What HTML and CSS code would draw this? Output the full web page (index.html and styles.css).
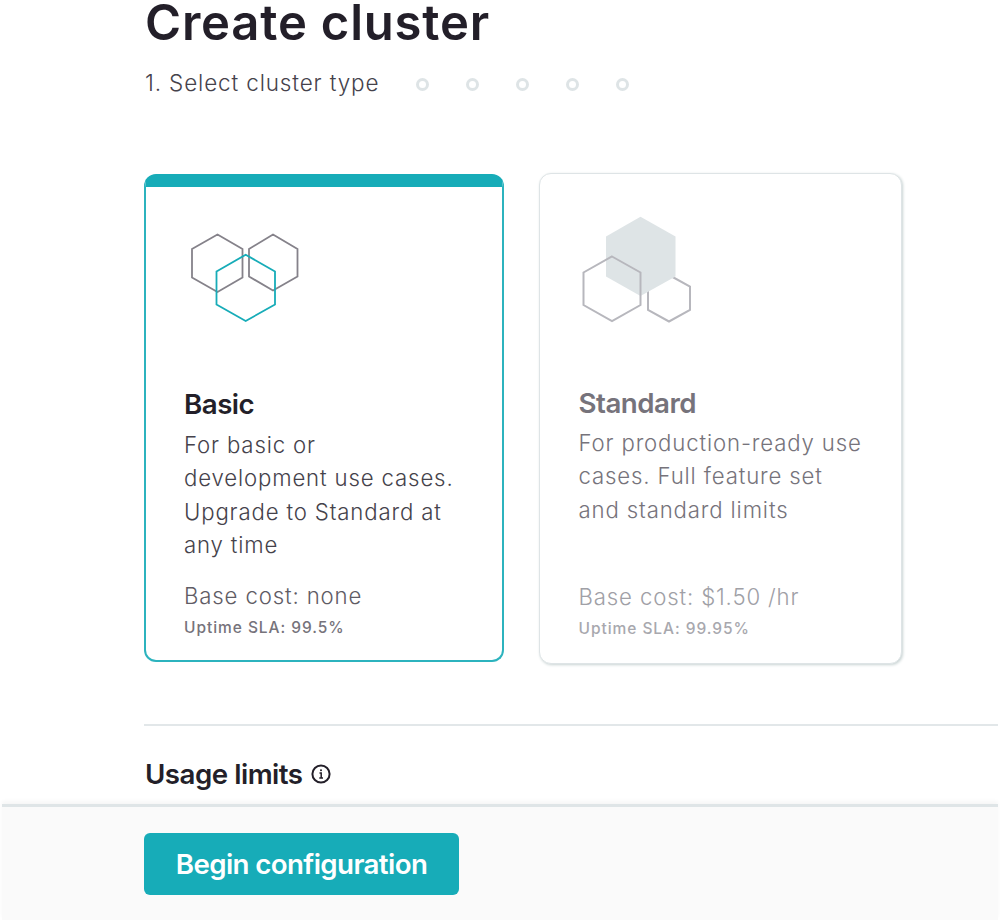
FILE: index.html
```
<!DOCTYPE html>
<html lang="en">
<head>
<meta charset="utf-8">
<title>Create cluster</title>
<link rel="stylesheet" href="styles.css">
</head>
<body>
<main class="page">
  <h1 class="title">Create cluster</h1>
  <div class="stepper">
    <span class="step-label">1. Select cluster type</span>
    <div class="dots">
      <span class="dot"></span><span class="dot"></span><span class="dot"></span><span class="dot"></span><span class="dot"></span>
    </div>
  </div>

  <div class="cards">
    <section class="card card-selected">
      <svg class="art" width="120" height="110" viewBox="184 215 120 110" fill="none" stroke-width="1.8">
        <path stroke="#85828a" d="M217.5 234.5 242.5 249V277.5L217.5 292 192 277.500V249ZM273 234.500 297.500 249V276.500L273 290.500 249 276.500V249Z"/>
        <path stroke="#17acb8" d="M245.700 254.700 275 271.500V304.500L245.700 321 216.500 304.500V271.500Z"/>
      </svg>
      <h2 class="name">Basic</h2>
      <p class="desc">For basic or<br>development use cases.<br>Upgrade to Standard at<br>any time</p>
      <p class="cost">Base cost: none</p>
      <p class="sla">Uptime SLA: 99.5%</p>
    </section>

    <section class="card card-muted">
      <svg class="art" width="120" height="110" viewBox="579 215 120 110" fill="none" stroke-width="2">
        <path stroke="#b7b7bd" d="M669 275 690 286.500V310L669 321.500 648 310V286.500Z"/>
        <path fill="#dee4e6" d="M640.500 216.800 675.500 236.500V276.500L640.500 296 606 276.500V236.500Z"/>
        <path stroke="#b7b7bd" d="M612 256.500 640.500 272.500V305L612 321 583.500 305V272.500Z"/>
      </svg>
      <h2 class="name">Standard</h2>
      <p class="desc">For production-ready use<br>cases. Full feature set<br>and standard limits</p>
      <p class="cost">Base cost: $1.50 /hr</p>
      <p class="sla">Uptime SLA: 99.95%</p>
    </section>
  </div>

  <section class="limits">
    <h2 class="limits-title">Usage limits</h2>
    <svg class="info" width="20" height="20" viewBox="0 0 20 20" fill="none" stroke="#231f29">
      <circle cx="10" cy="10" r="8.600" stroke-width="2"/>
      <path stroke-width="1.500" d="M8.500 8.900H10.200V13.800M8.300 14H12"/>
      <circle cx="10" cy="6.200" r="1" fill="#231f29" stroke="none"/>
    </svg>
  </section>
</main>
<footer class="footer">
  <button class="begin" type="button">Begin configuration</button>
</footer>
</body>
</html>
```

FILE: styles.css
```
* { box-sizing: border-box; }
html, body { height: 100%; }
body {
  margin: 0;
  display: flex;
  flex-direction: column;
  overflow: hidden;
  background: #fff;
  color: #231f29;
  font-family: Inter, sans-serif;
}
h1, h2, p { margin: 0; }

.page { height: 804px; flex: none; padding: 0 2px 0 144px; }

.title {
  height: 46px;
  padding-left: 1px;
  font-size: 49px;
  line-height: 46px;
  font-weight: 600;
  letter-spacing: 0.8px;
}

.stepper { display: flex; align-items: center; gap: 37px; margin-top: 20px; height: 34px; padding-left: 1px; }
.step-label {
  font-size: 22.5px;
  line-height: 32px;
  font-weight: 300;
  letter-spacing: 0.85px;
  color: #45424b;
}
.dots { display: flex; gap: 37px; padding-top: 2px; }
.dot { width: 13px; height: 13px; border: 3px solid #dee4e6; border-radius: 50%; }

.cards { display: flex; align-items: flex-start; gap: 35px; margin-top: 73px; }
.card {
  display: flex;
  flex-direction: column;
  border-radius: 12px;
  background: #fff;
}
.card-selected {
  width: 360px;
  height: 488px;
  margin-top: 1px;
  padding: 28px 0 0 38px;
  border: 2px solid #2cb3be;
  border-top: 13px solid #17acb8;
}
.card-muted {
  width: 363px;
  height: 491px;
  padding: 41px 0 0 38.5px;
  border: 1px solid #dee4e6;
  box-shadow: 1px 1px 3px #c8d3d3;
}
.art { display: block; flex: none; }

.name {
  margin-top: 61px;
  font-size: 27.7px;
  line-height: 36px;
  font-weight: 600;
  letter-spacing: -0.5px;
}
.desc {
  height: 133px;
  margin-top: 6px;
  font-size: 22.2px;
  line-height: 33.3px;
  font-weight: 300;
  letter-spacing: 0.85px;
  color: #45424b;
}
.cost {
  margin-top: 18px;
  font-size: 22.2px;
  line-height: 33px;
  font-weight: 300;
  letter-spacing: 0.85px;
  color: #5f5c65;
}
.sla {
  margin-top: 2px;
  font-size: 15.5px;
  line-height: 28px;
  font-weight: 500;
  letter-spacing: 0.95px;
  color: #76737b;
}
.card-muted .name { margin-top: 60px; color: #76737b; }
.card-muted .desc { margin-top: 5px; color: #76737b; }
.card-muted .cost { margin-top: 21px; color: #a0a0a6; }
.card-muted .sla { color: #a8a8ae; }

.limits {
  display: flex;
  align-items: center;
  gap: 8px;
  height: 78px;
  margin-top: 60px;
  padding: 20px 0 0 1px;
  border-top: 2px solid #e2e7e9;
}
.limits-title { font-size: 27.7px; line-height: 36px; font-weight: 600; letter-spacing: -0.5px; }
.info { flex: none; }

.footer {
  flex: none;
  height: 116px;
  margin: 0 2px;
  padding: 26px 0 0 142px;
  background: #fafafa;
  border-top: 3px solid #dfe5e7;
  box-shadow: 0 -3px 4px #f7f7f7;
}
.begin {
  width: 315px;
  height: 62px;
  border: 0;
  border-radius: 6px;
  background: #17acb8;
  color: #fff;
  font: 600 27.7px/62px Inter, sans-serif;
  letter-spacing: -0.6px;
  padding: 0;
}
```
